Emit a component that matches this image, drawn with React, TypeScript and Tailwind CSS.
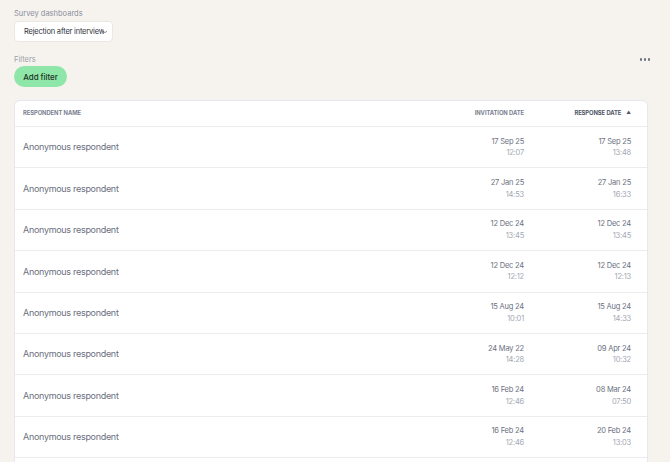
import { ChevronDown } from "lucide-react";

const rows = [
  ["17 Sep 25", "12:07", "17 Sep 25", "13:48"],
  ["27 Jan 25", "14:53", "27 Jan 25", "16:33"],
  ["12 Dec 24", "13:45", "12 Dec 24", "13:45"],
  ["12 Dec 24", "12:12", "12 Dec 24", "12:13"],
  ["15 Aug 24", "10:01", "15 Aug 24", "14:33"],
  ["24 May 22", "14:28", "09 Apr 24", "10:32"],
  ["16 Feb 24", "12:46", "08 Mar 24", "07:50"],
  ["16 Feb 24", "12:46", "20 Feb 24", "13:03"],
  ["16 Feb 24", "12:46", "20 Feb 24", "13:03"],
];

function DateCell({ date, time }: { date: string; time: string }) {
  return (
    <div className="flex flex-col items-end leading-none tracking-[-0.2px]">
      <span className="text-[7.5px] text-[#6b7080]">{date}</span>
      <span className="mt-[4px] text-[7.5px] text-[#a3a8b3]">{time}</span>
    </div>
  );
}

export default function App() {
  return (
    <div className="h-[462px] w-[670px] overflow-hidden bg-[#f6f3ef] px-[14px] pt-[8px] font-['Inter',sans-serif]">
      {/* Dashboard picker */}
      <div className="text-[7.5px] leading-[11px] text-[#8a8f9c]">Survey dashboards</div>
      <div className="mt-[2px] flex h-[21px] w-[99px] items-center rounded-[4px] border border-[#ebe8e3] bg-white pl-[9px]">
        <span className="w-[80px] overflow-hidden whitespace-nowrap text-[7.5px] tracking-[-0.2px] text-[#2f3340]">
          Rejection after interview
        </span>
        <ChevronDown className="ml-[-2px] h-[6px] w-[6px] shrink-0 text-[#2f3340]" strokeWidth={2.5} />
      </div>

      {/* Filters */}
      <div className="mt-[12px] flex items-center justify-between">
        <span className="text-[7.5px] leading-[11px] text-[#9ca0ab]">Filters</span>
        <div className="mr-[6px] flex gap-[1.5px]">
          <span className="h-[2.5px] w-[2.5px] rounded-full bg-[#6b7280]" />
          <span className="h-[2.5px] w-[2.5px] rounded-full bg-[#6b7280]" />
          <span className="h-[2.5px] w-[2.5px] rounded-full bg-[#6b7280]" />
        </div>
      </div>
      <button className="mt-[1px] flex h-[21px] w-[53px] items-center justify-center rounded-full bg-[#8ee6a8] text-[8px] font-medium tracking-[-0.1px] text-[#1d3325]">
        Add filter
      </button>

      {/* Responses table */}
      <div className="mt-[13px] w-[634px] rounded-t-[6px] border border-[#e8e6ee] bg-white">
        <div className="flex h-[26px] items-center border-b border-[#ebebf0] pl-[8px] pr-[16px] text-[5.8px] font-bold uppercase tracking-[-0.05px]">
          <span className="flex-1 text-[#7c8190]">Respondent name</span>
          <span className="text-[#7c8190]">Invitation date</span>
          <span className="flex w-[107px] items-center justify-end gap-[5px] text-[#4f5566]">
            Response date
            <span className="text-[4.5px]">▲</span>
          </span>
        </div>
        {rows.map((r, i) => (
          <div
            key={i}
            className="flex h-[41.4px] items-center border-b border-[#ebebf0] pl-[8px] pr-[16px]"
          >
            <span className="flex-1 text-[9px] tracking-[-0.3px] text-[#6b7080]">Anonymous respondent</span>
            <DateCell date={r[0]} time={r[1]} />
            <div className="flex w-[107px] justify-end">
              <DateCell date={r[2]} time={r[3]} />
            </div>
          </div>
        ))}
      </div>
    </div>
  );
}
